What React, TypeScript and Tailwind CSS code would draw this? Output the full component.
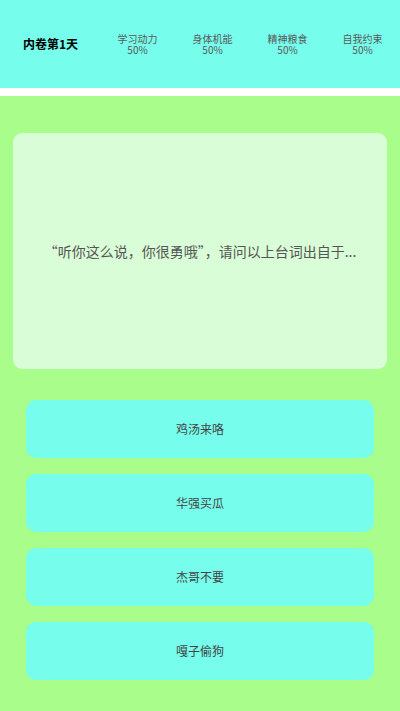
import React from "react";

const stats = ["学习动力", "身体机能", "精神粮食", "自我约束"];
const answers = ["鸡汤来咯", "华强买瓜", "杰哥不要", "嘎子偷狗"];

export default function App() {
  return (
    <div
      className="w-[400px] h-[711px] bg-[#a8fd8b] flex flex-col overflow-hidden"
      style={{ fontFamily: '"Noto Sans CJK SC", "Noto Sans", sans-serif' }}
    >
      <div className="h-[88px] bg-[#76fdeb] flex items-center shrink-0">
        <div className="w-[100px] pl-[23px] text-[12px] font-bold text-black leading-none">
          内卷第1天
        </div>
        {stats.map((s) => (
          <div key={s} className="w-[75px] flex flex-col items-center text-[10px] leading-[11px] text-[#5a5a5a]">
            <span>{s}</span>
            <span>50%</span>
          </div>
        ))}
      </div>
      <div className="h-[8px] bg-white shrink-0" />
      <div className="mt-[37px] mx-[13px] h-[236px] rounded-[9px] bg-[#d9fdd6] flex items-center justify-center">
        <span className="text-[14px] text-[#555555]">
          “听你这么说，你很勇哦”，请问以上台词出自于...
        </span>
      </div>
      <div className="mt-[31px] mx-[26px] flex flex-col gap-[16px]">
        {answers.map((a) => (
          <div
            key={a}
            className="h-[58px] rounded-[10px] bg-[#76fdeb] flex items-center justify-center text-[12px] text-[#444444]"
          >
            {a}
          </div>
        ))}
      </div>
    </div>
  );
}
